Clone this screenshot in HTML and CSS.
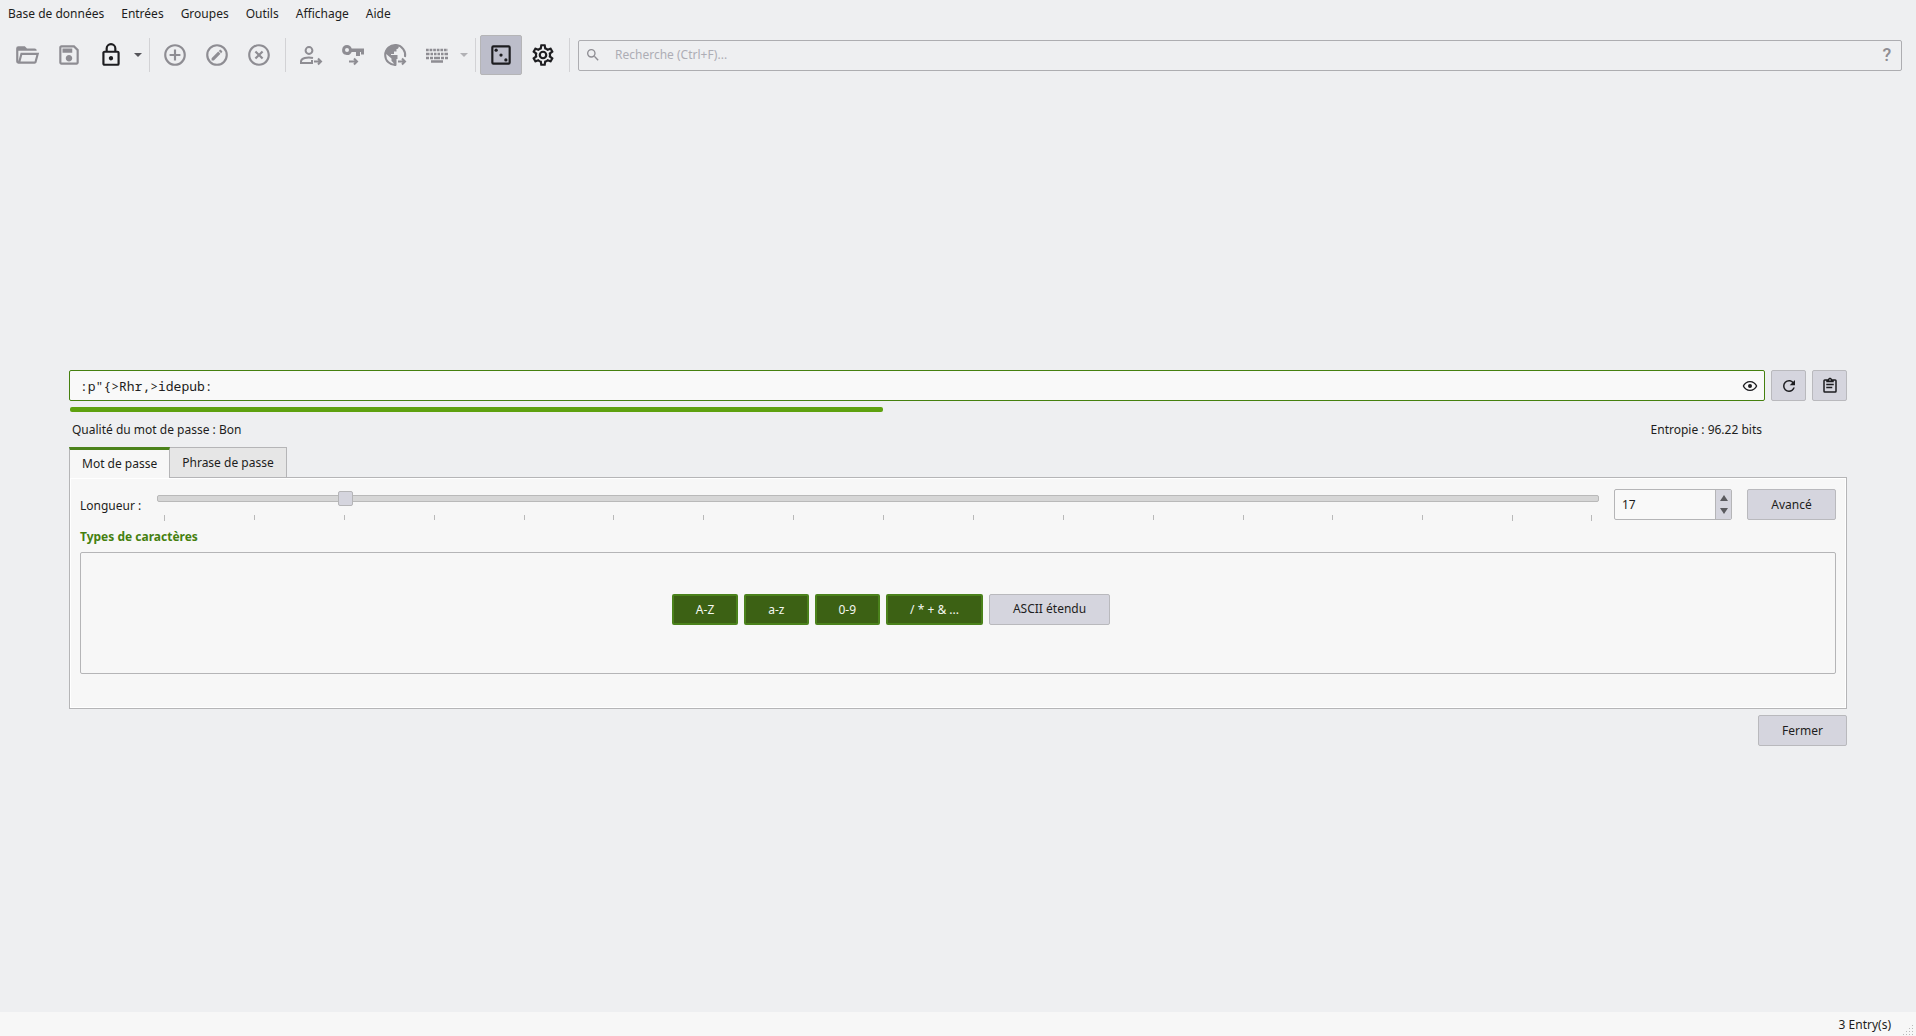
FILE: index.html
```html
<!DOCTYPE html>
<html lang="fr">
<head>
<meta charset="utf-8">
<title>Générateur de mots de passe</title>
<link rel="stylesheet" href="styles.css">
</head>
<body>
<nav class="menubar">
  <button class="menu">Base de données</button>
  <button class="menu">Entrées</button>
  <button class="menu">Groupes</button>
  <button class="menu">Outils</button>
  <button class="menu">Affichage</button>
  <button class="menu">Aide</button>
</nav>

<header class="toolbar">
  <button class="tool" disabled aria-label="Ouvrir"><svg viewBox="0 0 24 24"><path d="M6.1,10L4,18V8H21A2,2 0 0,0 19,6H12L10,4H4A2,2 0 0,0 2,6V18A2,2 0 0,0 4,20H19C19.9,20 20.7,19.4 20.9,18.5L23.2,10H6.1M19,18H6L7.6,12H20.6L19,18Z"/></svg></button>
  <button class="tool" disabled aria-label="Enregistrer"><svg viewBox="0 0 24 24"><path d="M17 3H5C3.89 3 3 3.9 3 5V19C3 20.1 3.89 21 5 21H19C20.1 21 21 20.1 21 19V7L17 3M19 19H5V5H16.17L19 7.83V19M12 12C10.34 12 9 13.34 9 15S10.34 18 12 18 15 16.66 15 15 13.66 12 12 12M6 6H15V10H6V6Z"/></svg></button>
  <button class="tool" aria-label="Verrouiller"><svg viewBox="0 0 24 24"><path d="M12,17C10.89,17 10,16.1 10,15C10,13.89 10.89,13 12,13A2,2 0 0,1 14,15A2,2 0 0,1 12,17M18,20V10H6V20H18M18,8A2,2 0 0,1 20,10V20A2,2 0 0,1 18,22H6C4.89,22 4,21.1 4,20V10C4,8.89 4.89,8 6,8H7V6A5,5 0 0,1 12,1A5,5 0 0,1 17,6V8H18M12,3A3,3 0 0,0 9,6V8H15V6A3,3 0 0,0 12,3Z"/></svg></button>
  <button class="drop" aria-label="Options de verrouillage"></button>
  <span class="sep"></span>
  <button class="tool" disabled aria-label="Ajouter une entrée"><svg viewBox="0 0 24 24"><path d="M12,20C7.59,20 4,16.41 4,12C4,7.59 7.59,4 12,4C16.41,4 20,7.59 20,12C20,16.41 16.41,20 12,20M12,2A10,10 0 0,0 2,12A10,10 0 0,0 12,22A10,10 0 0,0 22,12A10,10 0 0,0 12,2M13,7H11V11H7V13H11V17H13V13H17V11H13V7Z"/></svg></button>
  <button class="tool" disabled aria-label="Modifier une entrée"><svg viewBox="0 0 24 24"><path d="M12,2A10,10 0 0,0 2,12A10,10 0 0,0 12,22A10,10 0 0,0 22,12A10,10 0 0,0 12,2M12,4A8,8 0 0,1 20,12A8,8 0 0,1 12,20A8,8 0 0,1 4,12A8,8 0 0,1 12,4M15.1,7.07C14.96,7.07 14.81,7.13 14.7,7.24L13.7,8.23L15.77,10.3L16.77,9.3C16.98,9.08 16.98,8.73 16.77,8.5L15.5,7.24C15.39,7.13 15.24,7.07 15.1,7.07M13.13,8.81L7,14.94V17H9.08L15.2,10.88L13.13,8.81Z"/></svg></button>
  <button class="tool" disabled aria-label="Supprimer une entrée"><svg viewBox="0 0 24 24"><path d="M12,20C7.59,20 4,16.41 4,12C4,7.59 7.59,4 12,4C16.41,4 20,7.59 20,12C20,16.41 16.41,20 12,20M12,2C6.47,2 2,6.47 2,12C2,17.53 6.47,22 12,22C17.53,22 22,17.53 22,12C22,6.47 17.53,2 12,2M14.59,8L12,10.59L9.41,8L8,9.41L10.59,12L8,14.59L9.41,16L12,13.41L14.59,16L16,14.59L13.41,12L16,9.41L14.59,8Z"/></svg></button>
  <span class="sep"></span>
  <button class="tool" disabled aria-label="Copier le nom d'utilisateur"><svg viewBox="0 0 26 26"><g fill="none" stroke="currentColor" stroke-width="2"><circle cx="11" cy="8.500" r="3.400"/><path d="M15 16C9 14.500 3 16.500 3 19.500V21H14V18"/><path d="M16 19.500H22M20 16.500L23 19.500L20 22.500"/></g></svg></button>
  <button class="tool" disabled aria-label="Copier le mot de passe"><svg viewBox="0 0 26 26"><path fill-rule="evenodd" d="M7 3A5 5 0 1 0 11.700 10H16V14H20V10H21V12.500H24V6.500H11.700A5 5 0 0 0 7 3M7 6A2 2 0 1 1 7 10A2 2 0 0 1 7 6"/><path fill="none" stroke="currentColor" stroke-width="2" d="M9 19.500H16M14 16.500L17 19.500L14 22.500"/></svg></button>
  <button class="tool" disabled aria-label="Copier l'URL"><svg viewBox="0 0 26 26"><path fill="none" stroke="currentColor" stroke-width="2" d="M23 15A10 10 0 1 0 14 23"/><path d="M4 8C6 4 11 2 16 3.500C17.500 5 16.500 7 14.500 7V9.500H12V12H9V13H15.500V17H14.500V23.500H12C12.500 21 10.500 20 9.500 19V16.500L3 11Z"/><path fill="none" stroke="currentColor" stroke-width="2" d="M16 19.500H22M20 16.500L23 19.500L20 22.500"/></svg></button>
  <button class="tool" disabled aria-label="Saisie automatique"><svg viewBox="0 0 26 26"><path fill="none" stroke="currentColor" stroke-width="2.400" stroke-dasharray="2.700 .9" d="M2 8H24"/><path fill="none" stroke="currentColor" stroke-width="2.400" d="M2 12H5.500M6.500 12H9M10 12H12.500M13.500 12H16M17 12H19.500M20.500 12H24M2 16H5M6 16H9M10 16H16M17 16H20M21 16H24M7 19.500H19"/></svg></button>
  <button class="drop" disabled aria-label="Options de saisie automatique"></button>
  <span class="sep"></span>
  <button class="tool tool-on" aria-pressed="true" aria-label="Générateur de mots de passe"><svg viewBox="0 0 24 24"><path d="M19,5V19H5V5H19M19,3H5A2,2 0 0,0 3,5V19A2,2 0 0,0 5,21H19A2,2 0 0,0 21,19V5A2,2 0 0,0 19,3Z"/><circle cx="12" cy="12" r="1.500"/><circle cx="7.500" cy="7.500" r="1.500"/><circle cx="16.500" cy="16.500" r="1.500"/></svg></button>
  <button class="tool" aria-label="Paramètres"><svg viewBox="0 0 24 24"><path d="M12,8A4,4 0 0,1 16,12A4,4 0 0,1 12,16A4,4 0 0,1 8,12A4,4 0 0,1 12,8M12,10A2,2 0 0,0 10,12A2,2 0 0,0 12,14A2,2 0 0,0 14,12A2,2 0 0,0 12,10M10,22C9.75,22 9.54,21.82 9.5,21.58L9.13,18.93C8.5,18.68 7.96,18.34 7.44,17.94L4.95,18.95C4.73,19.03 4.46,18.95 4.34,18.73L2.34,15.27C2.21,15.05 2.27,14.78 2.46,14.63L4.57,12.97L4.5,12L4.57,11L2.46,9.37C2.27,9.22 2.21,8.95 2.34,8.73L4.34,5.27C4.46,5.05 4.73,4.96 4.95,5.05L7.44,6.05C7.96,5.66 8.5,5.32 9.13,5.07L9.5,2.42C9.54,2.18 9.75,2 10,2H14C14.25,2 14.46,2.18 14.5,2.42L14.87,5.07C15.5,5.32 16.04,5.66 16.56,6.05L19.05,5.05C19.27,4.96 19.54,5.05 19.66,5.27L21.66,8.73C21.79,8.95 21.73,9.22 21.54,9.37L19.43,11L19.5,12L19.43,13L21.54,14.63C21.73,14.78 21.79,15.05 21.66,15.27L19.66,18.73C19.54,18.95 19.27,19.04 19.05,18.95L16.56,17.95C16.04,18.34 15.5,18.68 14.87,18.93L14.5,21.58C14.46,21.82 14.25,22 14,22H10M11.25,4L10.88,6.61C9.68,6.86 8.62,7.5 7.85,8.39L5.44,7.35L4.69,8.65L6.8,10.2C6.4,11.37 6.4,12.64 6.8,13.8L4.68,15.36L5.43,16.66L7.86,15.62C8.63,16.5 9.68,17.14 10.87,17.38L11.24,20H12.76L13.13,17.39C14.32,17.14 15.37,16.5 16.14,15.62L18.57,16.66L19.32,15.36L17.2,13.81C17.6,12.64 17.6,11.37 17.2,10.2L19.31,8.65L18.56,7.35L16.15,8.39C15.38,7.5 14.32,6.86 13.12,6.62L12.75,4H11.25Z"/></svg></button>
  <span class="sep"></span>
  <div class="search">
    <svg viewBox="0 0 24 24"><path d="M9.5,3A6.500,6.500 0 0,1 16,9.500C16,11.110 15.410,12.590 14.440,13.730L14.710,14H15.500L20.500,19L19,20.500L14,15.500V14.710L13.730,14.440C12.590,15.410 11.110,16 9.500,16A6.500,6.500 0 0,1 3,9.500A6.500,6.500 0 0,1 9.500,3M9.500,5C7,5 5,7 5,9.500C5,12 7,14 9.500,14C12,14 14,12 14,9.500C14,7 12,5 9.500,5Z"/></svg>
    <input class="search-input" type="text" placeholder="Recherche (Ctrl+F)..." aria-label="Recherche">
    <button class="help" aria-label="Aide de la recherche">?</button>
  </div>
</header>

<main class="generator">
  <div class="password-row">
    <div class="password">
      <input class="password-input" type="text" value=":p&quot;{&gt;Rhr,&gt;idepub:" aria-label="Mot de passe généré" spellcheck="false">
      <button class="eye" aria-label="Afficher le mot de passe"><svg viewBox="0 0 24 24"><path d="M12,9A3,3 0 0,1 15,12A3,3 0 0,1 12,15A3,3 0 0,1 9,12A3,3 0 0,1 12,9M12,4.500C17,4.500 21.270,7.610 23,12C21.270,16.390 17,19.500 12,19.500C7,19.500 2.730,16.390 1,12C2.730,7.610 7,4.500 12,4.500M3.180,12C4.830,15.360 8.240,17.500 12,17.500C15.760,17.500 19.170,15.360 20.820,12C19.170,8.640 15.760,6.500 12,6.500C8.240,6.500 4.830,8.640 3.180,12Z"/></svg></button>
    </div>
    <button class="btn btn-icon" aria-label="Régénérer"><svg viewBox="0 0 24 24"><path d="M17.65,6.35C16.2,4.9 14.21,4 12,4A8,8 0 0,0 4,12A8,8 0 0,0 12,20C15.73,20 18.84,17.45 19.73,14H17.65C16.83,16.33 14.61,18 12,18A6,6 0 0,1 6,12A6,6 0 0,1 12,6C13.66,6 15.14,6.69 16.22,7.78L13,11H20V4L17.65,6.35Z"/></svg></button>
    <button class="btn btn-icon" aria-label="Copier"><svg viewBox="0 0 24 24"><path d="M19,3H14.820C14.400,1.840 13.300,1 12,1C10.700,1 9.600,1.840 9.180,3H5A2,2 0 0,0 3,5V19A2,2 0 0,0 5,21H19A2,2 0 0,0 21,19V5A2,2 0 0,0 19,3M12,3A1,1 0 0,1 13,4A1,1 0 0,1 12,5A1,1 0 0,1 11,4A1,1 0 0,1 12,3M7,7H17V5H19V19H5V5H7V7M17,11H7V9H17V11M15,15H7V13H15V15Z"/></svg></button>
  </div>
  <div class="quality">
    <div class="strength"><div class="strength-fill" style="width:48%"></div></div>
    <div class="quality-labels"><span>Qualité du mot de passe : Bon</span><span>Entropie : 96.22 bits</span></div>
  </div>
  <div class="tabs" role="tablist">
    <button class="tab tab-on" role="tab" aria-selected="true">Mot de passe</button>
    <button class="tab" role="tab" aria-selected="false">Phrase de passe</button>
  </div>
  <section class="panel">
    <div class="length-row">
      <label class="length-label" for="length">Longueur :</label>
      <div class="slider">
        <input class="range" id="length" type="range" min="1" max="128" value="17">
        <div class="ticks"><i></i><i></i><i></i><i></i><i></i><i></i><i></i><i></i><i></i><i></i><i></i><i></i><i></i><i></i><i></i><i></i></div>
      </div>
      <div class="spin">
        <input class="spin-input" type="text" value="17" aria-label="Longueur">
        <div class="spin-buttons">
          <button class="spin-up" aria-label="Augmenter"></button>
          <button class="spin-down" aria-label="Diminuer"></button>
        </div>
      </div>
      <button class="btn btn-wide">Avancé</button>
    </div>
    <h2 class="types-title">Types de caractères</h2>
    <div class="types">
      <button class="btn btn-on" aria-pressed="true">A-Z</button>
      <button class="btn btn-on" aria-pressed="true">a-z</button>
      <button class="btn btn-on" aria-pressed="true">0-9</button>
      <button class="btn btn-on" aria-pressed="true">/ * + &amp; ...</button>
      <button class="btn" aria-pressed="false">ASCII étendu</button>
    </div>
  </section>
  <div class="actions"><button class="btn btn-wide">Fermer</button></div>
</main>

<footer class="status">
  <span>3 Entry(s)</span>
  <svg class="grip" viewBox="0 0 12 12"><path d="M9 1h1v1h-1zM6 4h1v1h-1zM9 4h1v1h-1zM3 7h1v1h-1zM6 7h1v1h-1zM9 7h1v1h-1zM0 10h1v1h-1zM3 10h1v1h-1zM6 10h1v1h-1zM9 10h1v1h-1z"/></svg>
</footer>
</body>
</html>
```
FILE: styles.css
```css
:root {
  --window: #eeeff1;
  --panel: #f7f7f7;
  --base: #f9f9f9;
  --button: #d5d5de;
  --border: #b5b5b7;
  --text: #1d1d20;
  --muted: #8e8d93;
  --green: #45800f;
}

* { box-sizing: border-box; }

body {
  margin: 0;
  min-height: 100vh;
  display: flex;
  flex-direction: column;
  background: var(--window);
  color: var(--text);
  font: 12px/18px "Noto Sans", sans-serif;
}

button, input {
  margin: 0;
  padding: 0;
  border: 0;
  outline: 0;
  background: none;
  color: inherit;
  font: inherit;
}

svg { display: block; fill: currentColor; }

.menubar { display: flex; gap: 1px; height: 26px; padding-top: 2px; }
.menu { padding: 0 8px; }

.toolbar {
  display: flex;
  align-items: center;
  height: 58px;
  padding: 0 14px 0 6px;
}
.tool {
  display: grid;
  place-items: center;
  width: 42px;
  height: 40px;
  flex: none;
  border: 1px solid transparent;
  border-radius: 2px;
}
.tool:disabled { color: var(--muted); }
.tool svg { width: 26px; height: 26px; }
.tool-on { background: #bcbdca; border-color: var(--border); }

.drop { display: grid; place-items: center; width: 12px; height: 40px; flex: none; }
.drop::before {
  content: "";
  border: 4px solid transparent;
  border-top-color: #55555a;
  border-bottom: 0;
}
.drop:disabled::before { border-top-color: #b1b1b5; }

.sep { width: 10px; height: 34px; flex: none; }
.sep::before {
  content: "";
  display: block;
  width: 1px;
  height: 100%;
  margin: 0 auto;
  background: #d2d2d5;
}

.search {
  flex: 1;
  display: flex;
  align-items: center;
  height: 31px;
  margin-left: 4px;
  padding: 0 8px 0 6px;
  border: 1px solid #adadb1;
  border-radius: 2px;
  color: var(--muted);
}
.search svg { width: 16px; height: 16px; }
.search-input { flex: 1; padding: 0 14px; }
.search-input::placeholder { color: #adadb5; opacity: 1; }
.help { width: 12px; font: 500 18px/24px Roboto, sans-serif; }

.generator {
  flex: 1;
  display: flex;
  flex-direction: column;
  justify-content: center;
  padding: 20px 69px 0;
}

.password-row { display: flex; gap: 6px; }
.password {
  flex: 1;
  display: flex;
  align-items: center;
  height: 31px;
  padding: 0 6px 0 10px;
  border: 1px solid var(--green);
  border-radius: 2px;
  background: var(--base);
}
.password-input { flex: 1; font: 13px/18px "Noto Sans Mono", "DejaVu Sans Mono", monospace; }
.eye svg { width: 16px; height: 16px; }

.btn {
  height: 31px;
  padding: 0 23px;
  border: 1px solid #b9b9bd;
  border-radius: 2px;
  background: var(--button);
}
.btn-icon { display: grid; place-items: center; width: 35px; padding: 0; }
.btn-icon svg { width: 18px; height: 18px; }
.btn-wide { width: 89px; padding: 0; }
.btn-on {
  padding: 2px 22px 0;
  border: 2px solid #4b821b;
  background: #3c6114;
  color: #f4f7f1;
}

.quality { padding: 6px 83px 0 1px; }
.strength { height: 5px; }
.strength-fill { height: 100%; border-radius: 2px; background: #5ea10f; }
.quality-labels {
  display: flex;
  justify-content: space-between;
  padding: 9px 2px 8px;
}

.tabs { display: flex; }
.tab {
  height: 30px;
  padding: 0 12px;
  border: 1px solid var(--border);
  border-bottom: 0;
  border-left: 0;
  background: #e6e6e6;
}
.tab-on {
  height: 31px;
  margin-bottom: -1px;
  border-left: 1px solid var(--border);
  border-top: 3px solid #4b821b;
  background: var(--panel);
  z-index: 1;
}

.panel {
  padding: 10px;
  height: 232px;
  border: 1px solid var(--border);
  background: var(--panel);
  box-shadow: inset 0 0 0 1px #fff;
}
.length-row { display: flex; align-items: center; padding-top: 1px; }
.length-label { width: 77px; padding-top: 2px; }
.slider { flex: 1; height: 31px; padding-top: 2px; }
.range {
  display: block;
  width: 100%;
  height: 15px;
  appearance: none;
}
.range::-webkit-slider-runnable-track {
  height: 7px;
  border: 1px solid #b9b9b9;
  border-radius: 2px;
  background: #d6d6d6;
}
.range::-webkit-slider-thumb {
  appearance: none;
  width: 15px;
  height: 15px;
  margin-top: -5px;
  border: 1px solid var(--border);
  border-radius: 2px;
  background: var(--button);
}
/* One tick every 8 characters; the last interval covers 7 */
.ticks { display: flex; padding: 9px 7px 0; }
.ticks i { flex: 8 1 0; height: 5px; border-left: 1px solid #b9b9b9; }
.ticks i:first-child { height: 6px; }
.ticks i:last-child { flex-grow: 7; height: 6px; border-right: 1px solid #b9b9b9; }

.spin {
  display: flex;
  width: 118px;
  height: 31px;
  margin: 0 15px;
  border: 1px solid var(--border);
  border-radius: 2px;
  background: var(--base);
}
.spin-input { flex: 1; min-width: 0; padding-left: 7px; }
.spin-buttons {
  display: flex;
  flex-direction: column;
  width: 16px;
  border-left: 1px solid var(--border);
  background: var(--button);
}
.spin-up, .spin-down { flex: 1; display: grid; justify-items: center; }
.spin-up { align-items: end; padding-bottom: 3px; }
.spin-down { align-items: start; padding-top: 4px; }
.spin-up::before, .spin-down::before {
  content: "";
  border: 4px solid transparent;
}
.spin-up::before { border-top: 0; border-bottom: 6px solid #5a5a5e; }
.spin-down::before { border-bottom: 0; border-top: 6px solid #5a5a5e; }

.types-title { margin: 8px 0 6px; font-size: 12px; line-height: 18px; font-weight: 700; color: var(--green); }
.types {
  display: flex;
  justify-content: center;
  align-items: center;
  gap: 6px;
  height: 122px;
  padding: 0 134px 8px 0;
  border: 1px solid var(--border);
  border-radius: 2px;
}

.actions { display: flex; justify-content: flex-end; padding-top: 6px; }

.status {
  display: flex;
  justify-content: flex-end;
  align-items: center;
  gap: 12px;
  height: 24px;
  padding: 2px 1px 0 0;
  background: var(--panel);
}
.grip { width: 12px; height: 12px; align-self: flex-end; color: #b9b9b9; }
```
